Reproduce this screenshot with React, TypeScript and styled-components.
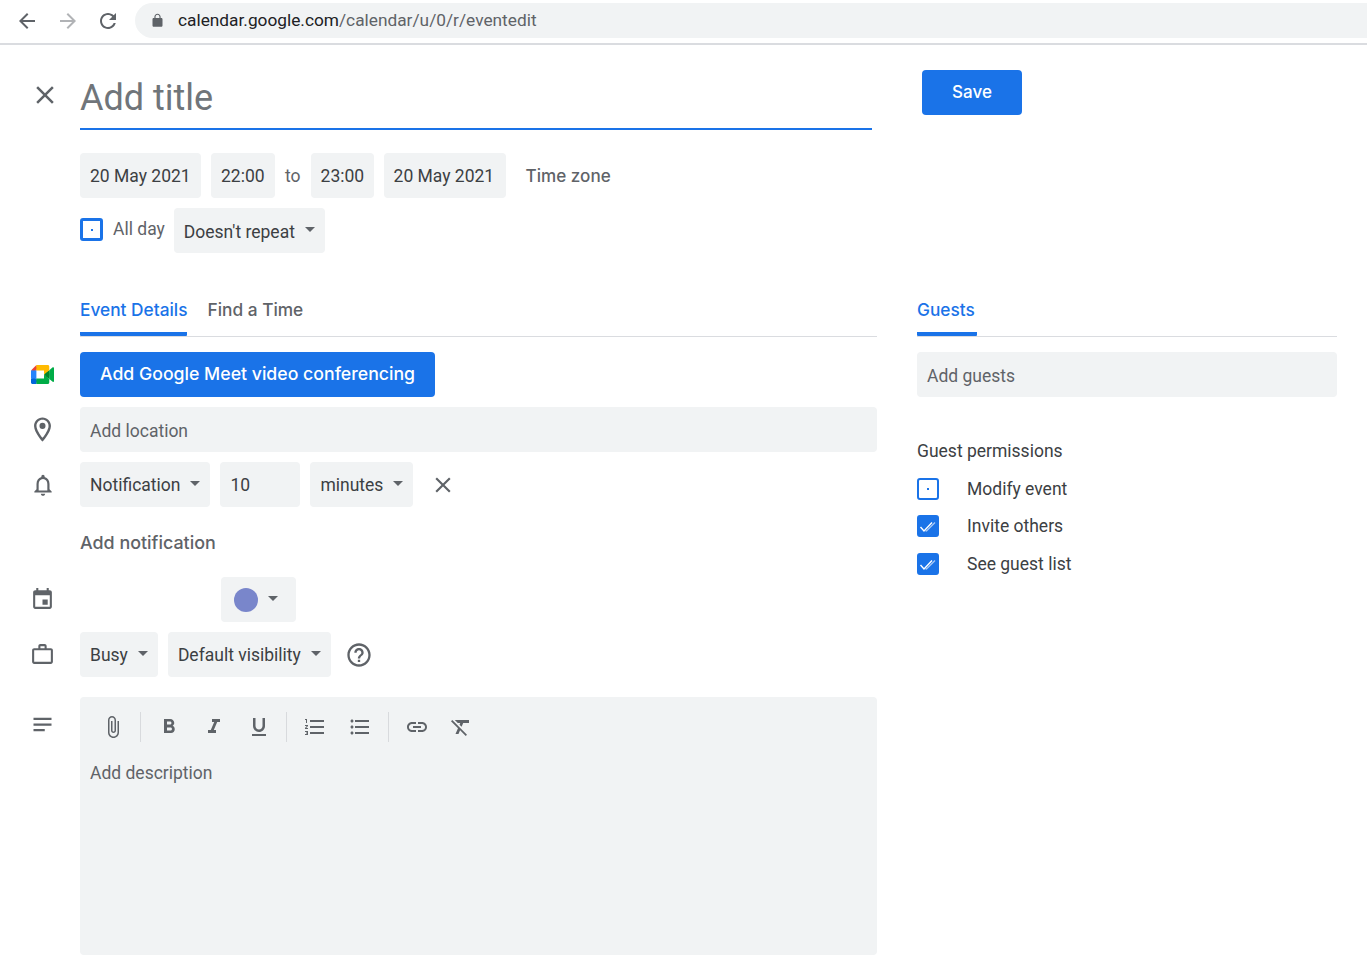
import React from 'react';
import styled, { createGlobalStyle } from 'styled-components';

const headingFont = 'Inter, Roboto, sans-serif';

const GlobalStyle = createGlobalStyle`
  html, body { margin: 0; padding: 0; background: #fff; }
  body { font-family: Roboto, "Liberation Sans", sans-serif; color: #3c4043; }
`;

const Page = styled.div`
  width: 1367px;
  height: 973px;
  overflow: hidden;
  background: #fff;
`;

/* browser chrome */
const BrowserBar = styled.div`
  height: 45px;
  box-sizing: border-box;
  display: flex;
  align-items: flex-start;
  border-bottom: 2px solid #dadce0;
  padding: 3px 0 0 16px;
`;
const NavIcon = styled.svg<{ $muted?: boolean }>`
  width: 24px;
  height: 24px;
  margin: 6px 16px 0 0;
  fill: ${(p) => (p.$muted ? '#b1b3b6' : '#5f6368')};
  flex: none;
`;
const BackIcon = styled(NavIcon)`
  margin-left: -1px;
  margin-right: 17px;
`;
const AddressPill = styled.div`
  flex: 1;
  margin-left: -1px;
  height: 35px;
  box-sizing: border-box;
  border-radius: 18px 0 0 18px;
  background: #f1f3f4;
  display: flex;
  align-items: center;
  padding: 0 0 1px 15px;
  font-size: 17.3px;
  color: #5f6368;
`;
const LockIcon = styled.svg`
  width: 15px;
  height: 15px;
  fill: #5f6368;
  margin-right: 13px;
`;
const Host = styled.span`
  color: #202124;
`;

/* form */
const TitleRow = styled.div`
  display: flex;
  height: 108px;
`;
const IconSlot = styled.div`
  width: 70px;
  flex: none;
  display: flex;
  align-items: center;
  justify-content: center;
  padding-left: 15px;
  box-sizing: border-box;
`;
const CloseSlot = styled.div`
  width: 80px;
  flex: none;
  padding: 35px 0 0 30px;
  box-sizing: border-box;
`;
const TitleField = styled.div`
  width: 792px;
  height: 85px;
  box-sizing: border-box;
  border-bottom: 2px solid #1a73e8;
  padding-top: 29px;
  font-size: 36px;
  line-height: 48px;
  color: #70757a;
`;
const SaveButton = styled.button`
  width: 100px;
  height: 45px;
  margin: 25px 0 0 50px;
  padding: 0 0 2px;
  border: 0;
  border-radius: 4px;
  background: #1a73e8;
  color: #fff;
  font: 500 17px ${headingFont};
`;
const ChipRow = styled.div<{ $mb?: number }>`
  display: flex;
  align-items: center;
  gap: 10px;
  height: 45px;
  margin-bottom: ${(p) => p.$mb ?? 10}px;
`;
const IndentRow = styled(ChipRow)`
  padding-left: 80px;
`;
const Chip = styled.div<{ $w?: number }>`
  height: 45px;
  box-sizing: border-box;
  ${(p) => (p.$w ? `width: ${p.$w}px;` : '')}
  padding: 0 10px;
  border-radius: 4px;
  background: #f1f3f4;
  display: flex;
  align-items: center;
  flex: none;
  font-size: 17.5px;
  color: #3c4043;
  white-space: nowrap;
`;
const RepeatChip = styled(Chip)`
  padding-top: 2px;
  margin-left: -1px;
`;
const Caret = styled.span`
  width: 0;
  height: 0;
  margin: -3px 0 0 10px;
  border-left: 5px solid transparent;
  border-right: 5px solid transparent;
  border-top: 5px solid #5f6368;
`;
const RepeatCaret = styled(Caret)`
  margin-top: -5px;
`;
const Plain = styled.span`
  font-size: 17.5px;
  color: #5f6368;
`;
const AllDayLabel = styled(Plain)`
  margin-bottom: 4px;
`;
const TimeZone = styled.span`
  margin-left: 10px;
  font: 500 17.1px ${headingFont};
  color: #5f6368;
`;
const Box = styled.div<{ $checked?: boolean; $thick?: boolean }>`
  width: ${(p) => (p.$thick ? 23 : 22)}px;
  height: ${(p) => (p.$thick ? 23 : 22)}px;
  box-sizing: border-box;
  border: ${(p) => (p.$thick ? 3 : 2)}px solid #1a73e8;
  border-radius: 3px;
  background: ${(p) => (p.$checked ? '#1a73e8' : '#fff')};
  display: flex;
  align-items: center;
  justify-content: center;
  flex: none;
`;
const AllDayBox = styled(Box)`
  margin-bottom: 2px;
`;
const Dot = styled.i`
  width: 2px;
  height: 2px;
  background: #1a73e8;
`;
const Columns = styled.div`
  display: grid;
  grid-template-columns: 877px 420px;
  column-gap: 40px;
  margin-top: 44px;
`;
const TabBar = styled.div<{ $indent?: boolean }>`
  height: 39px;
  margin: 0 0 15px ${(p) => (p.$indent ? 80 : 0)}px;
  display: flex;
  gap: 20px;
  border-bottom: 1px solid #dadce0;
`;
const Tab = styled.div<{ $active?: boolean }>`
  height: 39px;
  box-sizing: border-box;
  font: 500 17.3px/26px ${headingFont};
  color: ${(p) => (p.$active ? '#1a73e8' : '#5f6368')};
  border-bottom: 4px solid ${(p) => (p.$active ? '#1a73e8' : 'transparent')};
  border-radius: 0 0 1px 1px;
`;
const GuestTab = styled(Tab)`
  width: 60px;
`;
const MeetButton = styled.div`
  height: 45px;
  box-sizing: border-box;
  padding: 0 20px 2px;
  border-radius: 4px;
  background: #1a73e8;
  color: #fff;
  display: flex;
  align-items: center;
  font: 500 17.7px ${headingFont};
  white-space: nowrap;
`;
const Field = styled(Chip)`
  flex: 1;
  padding-top: 2px;
  color: #5f6368;
`;
const RowIcon = styled.svg<{ $size?: number }>`
  width: ${(p) => p.$size ?? 24}px;
  height: ${(p) => p.$size ?? 24}px;
  fill: #5f6368;
  flex: none;
`;
const CloseIcon = styled(RowIcon)`
  display: block;
`;
const RemoveIcon = styled(RowIcon)`
  margin-left: 7px;
`;
const HelpIcon = styled(RowIcon)`
  margin-left: 4px;
`;
const AddNotification = styled.div`
  height: 70px;
  margin-top: -10px;
  padding-left: 80px;
  display: flex;
  align-items: center;
  font: 500 17.9px ${headingFont};
  color: #5f6368;
`;
const ColorDot = styled.span`
  width: 24px;
  height: 24px;
  border-radius: 50%;
  background: #7986cb;
  margin-left: 3px;
`;
const ColorChip = styled(Chip)`
  margin-left: 141px;
  width: 75px;
`;
const DescriptionRow = styled.div`
  display: flex;
  margin-top: 20px;
`;
const DescSlot = styled(IconSlot)`
  width: 80px;
  padding: 14px 10px 0 15px;
  align-items: flex-start;
`;
const Editor = styled.div`
  flex: 1;
  height: 258px;
  border-radius: 4px;
  background: #f1f3f4;
  padding: 10px 10px 0;
  box-sizing: border-box;
`;
const Toolbar = styled.div`
  height: 40px;
  display: flex;
  align-items: center;
  padding-left: 11px;
`;
const ToolIcon = styled.svg<{ $gap?: number }>`
  width: 24px;
  height: 24px;
  fill: #5f6368;
  margin-right: ${(p) => p.$gap ?? 21}px;
  flex: none;
`;
const ToolDivider = styled.span`
  width: 1px;
  height: 30px;
  background: #d8dadd;
  margin-right: 16px;
  flex: none;
`;
const DescriptionText = styled.div`
  margin-top: 16px;
  font-size: 17.5px;
  color: #5f6368;
`;
const GuestField = styled(Field)`
  flex: none;
  width: 420px;
`;
const PermTitle = styled.div`
  margin-top: 43px;
  font-size: 17.5px;
  line-height: 22px;
  color: #3c4043;
`;
const PermList = styled.div`
  margin-top: 15px;
  display: flex;
  flex-direction: column;
  gap: 14.5px;
`;
const PermRow = styled.div`
  display: flex;
  align-items: center;
  gap: 28px;
  height: 23px;
  font-size: 17.5px;
  color: #3c4043;
`;
const CheckSvg = styled.svg`
  width: 18px;
  height: 18px;
  fill: none;
  stroke: #fff;
  stroke-width: 1.4;
`;

const paths = {
  back: 'M20 11H7.83l5.59-5.59L12 4l-8 8 8 8 1.41-1.41L7.83 13H20v-2z',
  forward: 'M12 4l-1.41 1.41L16.17 11H4v2h12.17l-5.58 5.59L12 20l8-8z',
  reload: 'M17.65 6.35C16.2 4.9 14.21 4 12 4c-4.42 0-7.99 3.58-7.99 8s3.57 8 7.99 8c3.73 0 6.84-2.55 7.73-6h-2.08c-.82 2.33-3.04 4-5.65 4-3.31 0-6-2.69-6-6s2.69-6 6-6c1.66 0 3.14.69 4.22 1.78L13 11h7V4l-2.35 2.35z',
  lock: 'M18 8h-1V6c0-2.76-2.24-5-5-5S7 3.24 7 6v2H6c-1.1 0-2 .9-2 2v10c0 1.1.9 2 2 2h12c1.1 0 2-.9 2-2V10c0-1.1-.9-2-2-2zM8.9 8V6c0-1.71 1.39-3.1 3.1-3.1 1.71 0 3.1 1.39 3.1 3.1v2H8.9z',
  close: 'M19 6.41L17.59 5 12 10.59 6.41 5 5 6.41 10.59 12 5 17.59 6.41 19 12 13.41 17.59 19 19 17.59 13.41 12z',
  place: 'M12 2C8.13 2 5 5.13 5 9c0 5.25 7 13 7 13s7-7.75 7-13c0-3.87-3.13-7-7-7zM7 9c0-2.76 2.24-5 5-5s5 2.24 5 5c0 2.88-2.88 7.19-5 9.88C9.92 16.21 7 11.85 7 9zM12 6.5a2.5 2.5 0 1 0 0 5 2.5 2.5 0 0 0 0-5z',
  bell: 'M12 22c1.1 0 2-.9 2-2h-4c0 1.1.9 2 2 2zm6-6v-5c0-3.07-1.63-5.64-4.5-6.32V4c0-.83-.67-1.5-1.5-1.5s-1.5.67-1.5 1.5v.68C7.64 5.36 6 7.92 6 11v5l-2 2v1h16v-1l-2-2zm-2 1H8v-6c0-2.48 1.51-4.5 4-4.5s4 2.02 4 4.5v6z',
  event: 'M17 12h-5v5h5v-5zM16 1v2H8V1H6v2H5c-1.11 0-1.99.9-1.99 2L3 19c0 1.1.89 2 2 2h14c1.1 0 2-.9 2-2V5c0-1.1-.9-2-2-2h-1V1h-2zm3 18H5V8h14v11z',
  work: 'M20 6h-4V4c0-1.11-.89-2-2-2h-4c-1.11 0-2 .89-2 2v2H4c-1.11 0-1.99.89-1.99 2L2 19c0 1.11.89 2 2 2h16c1.11 0 2-.89 2-2V8c0-1.11-.89-2-2-2zm-6 0h-4V4h4v2zm6 13H4V8h16v11z',
  subject: 'M4 18h10v-2H4v2zM20 6H4v2h16V6zM4 13h16v-2H4v2z',
  help: 'M11 18h2v-2h-2v2zm1-16C6.48 2 2 6.48 2 12s4.48 10 10 10 10-4.48 10-10S17.52 2 12 2zm0 18c-4.41 0-8-3.59-8-8s3.59-8 8-8 8 3.59 8 8-3.59 8-8 8zm0-14c-2.21 0-4 1.79-4 4h2c0-1.1.9-2 2-2s2 .9 2 2c0 2-3 1.75-3 5h2c0-2.25 3-2.5 3-5 0-2.21-1.79-4-4-4z',
  attach: 'M16.5 6v11.5c0 2.21-1.79 4-4 4s-4-1.79-4-4V5c0-1.38 1.12-2.5 2.5-2.5s2.5 1.12 2.5 2.5v10.5c0 .55-.45 1-1 1s-1-.45-1-1V6H10v9.5c0 1.38 1.12 2.5 2.5 2.5s2.5-1.12 2.5-2.5V5c0-2.21-1.79-4-4-4S7 2.79 7 5v12.5c0 3.04 2.46 5.5 5.5 5.5s5.5-2.46 5.5-5.5V6h-1.5z',
  bold: 'M15.6 10.79c.97-.67 1.65-1.77 1.65-2.79 0-2.26-1.75-4-4-4H7v14h7.04c2.09 0 3.71-1.7 3.71-3.79 0-1.52-.86-2.82-2.15-3.42zM10 6.5h3c.83 0 1.5.67 1.5 1.5s-.67 1.5-1.5 1.5h-3v-3zm3.5 9H10v-3h3.5c.83 0 1.5.67 1.5 1.5s-.67 1.5-1.5 1.5z',
  italic: 'M10 4v3h2.21l-3.42 8H6v3h8v-3h-2.21l3.42-8H18V4z',
  underline: 'M12 17c3.31 0 6-2.69 6-6V3h-2.5v8c0 1.93-1.57 3.5-3.5 3.5S8.5 12.93 8.5 11V3H6v8c0 3.31 2.69 6 6 6zm-7 2v2h14v-2H5z',
  numbered: 'M2 17h2v.5H3v1h1v.5H2v1h3v-4H2v1zm1-9h1V4H2v1h1v3zm-1 3h1.8L2 13.1v.9h3v-1H3.2L5 10.9V10H2v1zm5-6v2h14V5H7zm0 14h14v-2H7v2zm0-6h14v-2H7v2z',
  bulleted: 'M4 10.5c-.83 0-1.5.67-1.5 1.5s.67 1.5 1.5 1.5 1.5-.67 1.5-1.5-.67-1.5-1.5-1.5zm0-6c-.83 0-1.5.67-1.5 1.5S3.17 7.5 4 7.5 5.5 6.83 5.5 6 4.83 4.5 4 4.5zm0 12c-.83 0-1.5.68-1.5 1.5s.68 1.5 1.5 1.5 1.5-.68 1.5-1.5-.67-1.5-1.5-1.5zM7 19h14v-2H7v2zm0-6h14v-2H7v2zm0-8v2h14V5H7z',
  link: 'M3.9 12c0-1.71 1.39-3.1 3.1-3.1h4V7H7c-2.76 0-5 2.24-5 5s2.24 5 5 5h4v-1.9H7c-1.71 0-3.1-1.39-3.1-3.1zM8 13h8v-2H8v2zm9-6h-4v1.9h4c1.71 0 3.1 1.39 3.1 3.1s-1.39 3.1-3.1 3.1h-4V17h4c2.76 0 5-2.24 5-5s-2.24-5-5-5z',
  clear: 'M3.27 5L2 6.27l6.97 6.97L6.5 19h3l1.57-3.66L16.73 21 18 19.73 3.55 5.27 3.27 5zM6 5v.18L8.82 8h2.4l-.72 1.68 2.1 2.1L14.21 8H20V5H6z',
};

const MeetLogo = () => (
  <svg width="23" height="19" viewBox="0 0 87.5 72">
    <path fill="#00832d" d="M49.5 36l8.53 9.75 11.47 7.33 2-17.02-2-16.64-11.69 6.44z" />
    <path fill="#0066da" d="M0 51.5V66c0 3.315 2.685 6 6 6h14.5l3-10.96-3-9.54-9.95-3z" />
    <path fill="#e94235" d="M20.5 0L0 20.5l10.55 3 9.95-3 2.95-9.41z" />
    <path fill="#2684fc" d="M20.5 20.5H0v31h20.5z" />
    <path fill="#00ac47" d="M82.6 8.68L69.5 19.42v33.66l13.16 10.79c1.97 1.54 4.85.135 4.85-2.37V11c0-2.535-2.945-3.925-4.91-2.32zM49.5 36v15.5h-29V72h43c3.315 0 6-2.685 6-6V53.08z" />
    <path fill="#ffba00" d="M63.5 0h-43v20.5h29V36l20-16.57V6c0-3.315-2.685-6-6-6z" />
  </svg>
);

const Icon = ({ d, size }: { d: string; size?: number }) => (
  <RowIcon viewBox="0 0 24 24" $size={size}>
    <path d={d} />
  </RowIcon>
);

const Tool = ({ d, gap }: { d: string; gap?: number }) => (
  <ToolIcon viewBox="0 0 24 24" $gap={gap}>
    <path d={d} />
  </ToolIcon>
);

const Check = () => (
  <Box $checked>
    <CheckSvg viewBox="0 0 18 18">
      <path d="M1.5 10l3.5 4 8-8.5" />
      <path d="M6.5 13.5l1 .5 8.5-8.5" opacity="0.6" />
    </CheckSvg>
  </Box>
);

const permissions = [
  { label: 'Modify event', checked: false },
  { label: 'Invite others', checked: true },
  { label: 'See guest list', checked: true },
];

const App = () => (
  <Page>
    <GlobalStyle />
    <BrowserBar>
      <BackIcon viewBox="0 0 24 24"><path d={paths.back} /></BackIcon>
      <NavIcon viewBox="0 0 24 24" $muted><path d={paths.forward} /></NavIcon>
      <NavIcon viewBox="0 0 24 24"><path d={paths.reload} /></NavIcon>
      <AddressPill>
        <LockIcon viewBox="0 0 24 24"><path d={paths.lock} /></LockIcon>
        <Host>calendar.google.com</Host>/calendar/u/0/r/eventedit
      </AddressPill>
    </BrowserBar>

    <TitleRow>
      <CloseSlot>
        <CloseIcon viewBox="0 0 24 24" $size={30}><path d={paths.close} /></CloseIcon>
      </CloseSlot>
      <TitleField>Add title</TitleField>
      <SaveButton>Save</SaveButton>
    </TitleRow>

    <IndentRow>
      <Chip $w={121}>20 May 2021</Chip>
      <Chip $w={64}>22:00</Chip>
      <Plain>to</Plain>
      <Chip $w={63}>23:00</Chip>
      <Chip $w={122}>20 May 2021</Chip>
      <TimeZone>Time zone</TimeZone>
    </IndentRow>
    <IndentRow $mb={0}>
      <AllDayBox $thick><Dot /></AllDayBox>
      <AllDayLabel>All day</AllDayLabel>
      <RepeatChip>Doesn't repeat<RepeatCaret /></RepeatChip>
    </IndentRow>

    <Columns>
      <div>
        <TabBar $indent>
          <Tab $active>Event Details</Tab>
          <Tab>Find a Time</Tab>
        </TabBar>
        <ChipRow>
          <IconSlot><MeetLogo /></IconSlot>
          <MeetButton>Add Google Meet video conferencing</MeetButton>
        </ChipRow>
        <ChipRow>
          <IconSlot><Icon d={paths.place} size={29} /></IconSlot>
          <Field>Add location</Field>
        </ChipRow>
        <ChipRow>
          <IconSlot><Icon d={paths.bell} size={26} /></IconSlot>
          <Chip>Notification<Caret /></Chip>
          <Chip $w={80}>10</Chip>
          <Chip>minutes<Caret /></Chip>
          <RemoveIcon viewBox="0 0 24 24" $size={26}><path d={paths.close} /></RemoveIcon>
        </ChipRow>
        <AddNotification>Add notification</AddNotification>
        <ChipRow>
          <IconSlot><Icon d={paths.event} size={25} /></IconSlot>
          <ColorChip><ColorDot /><Caret /></ColorChip>
        </ChipRow>
        <ChipRow>
          <IconSlot><Icon d={paths.work} size={25} /></IconSlot>
          <Chip>Busy<Caret /></Chip>
          <Chip>Default visibility<Caret /></Chip>
          <HelpIcon viewBox="0 0 24 24" $size={28}><path d={paths.help} /></HelpIcon>
        </ChipRow>
        <DescriptionRow>
          <DescSlot><Icon d={paths.subject} size={27} /></DescSlot>
          <Editor>
            <Toolbar>
              <Tool d={paths.attach} gap={15} />
              <ToolDivider />
              <Tool d={paths.bold} gap={20.5} />
              <Tool d={paths.italic} gap={21.5} />
              <Tool d={paths.underline} gap={15} />
              <ToolDivider />
              <Tool d={paths.numbered} />
              <Tool d={paths.bulleted} gap={16} />
              <ToolDivider />
              <Tool d={paths.link} gap={20} />
              <Tool d={paths.clear} />
            </Toolbar>
            <DescriptionText>Add description</DescriptionText>
          </Editor>
        </DescriptionRow>
      </div>

      <div>
        <TabBar>
          <GuestTab $active>Guests</GuestTab>
        </TabBar>
        <GuestField>Add guests</GuestField>
        <PermTitle>Guest permissions</PermTitle>
        <PermList>
          {permissions.map((item) => (
            <PermRow key={item.label}>
              {item.checked ? <Check /> : <Box><Dot /></Box>}
              {item.label}
            </PermRow>
          ))}
        </PermList>
      </div>
    </Columns>
  </Page>
);

export default App;
